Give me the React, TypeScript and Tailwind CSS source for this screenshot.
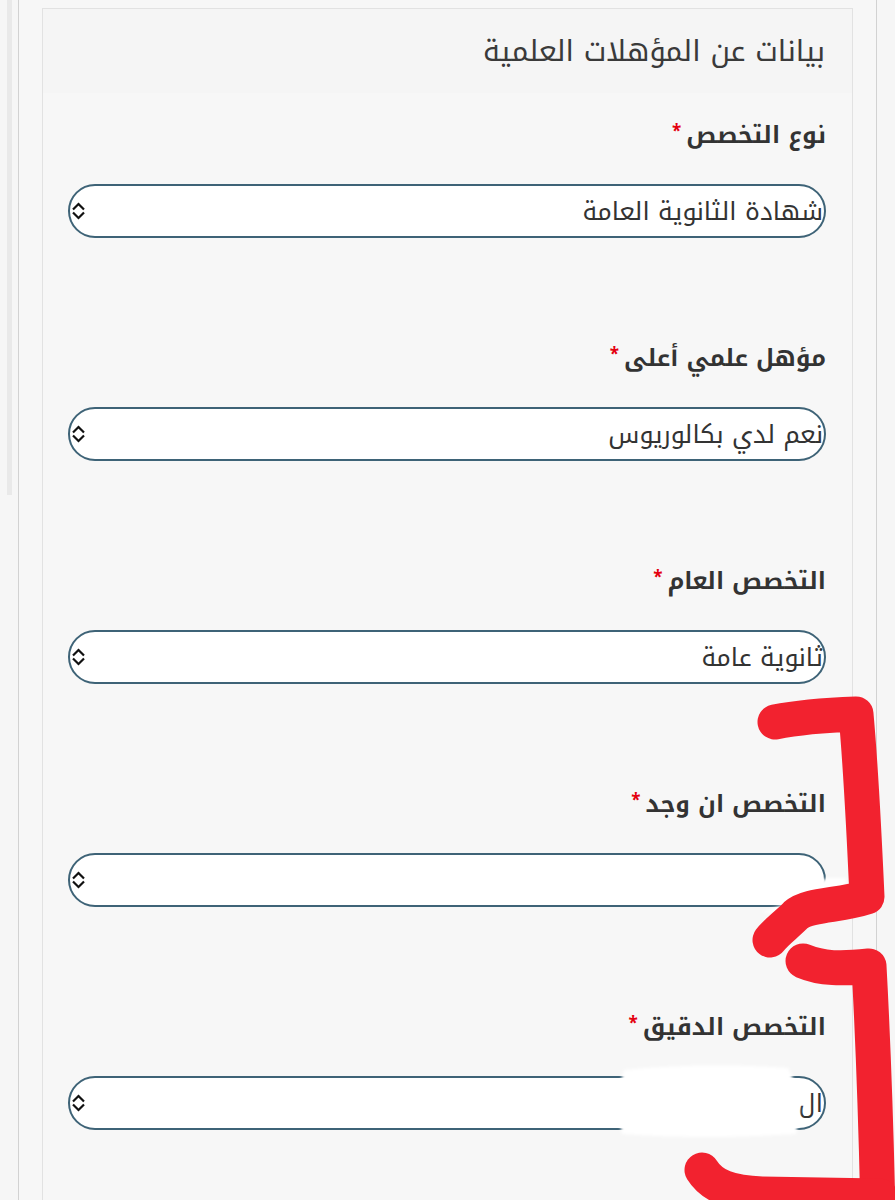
import React from "react";

interface Field {
  label: string;
  value: string;
}

const FIELDS: Field[] = [
  { label: "نوع التخصص", value: "شهادة الثانوية العامة" },
  { label: "مؤهل علمي أعلى", value: "نعم لدي بكالوريوس" },
  { label: "التخصص العام", value: "ثانوية عامة" },
  { label: "التخصص ان وجد", value: "" },
  { label: "التخصص الدقيق", value: "ال" },
];

const FONT = {
  fontFamily: '"Noto Kufi Arabic", "Noto Sans Arabic", "DejaVu Sans", sans-serif',
};

export default function App() {
  return (
    <div
      className="relative h-[1200px] w-[895px] overflow-hidden bg-[#f6f6f6] text-[#333]"
      style={FONT}
    >
      <div className="flex h-full pl-[7px]">
        {/* scroll thumb */}
        <div className="h-[495px] w-[5px] shrink-0 bg-[#e9e9e9]" />

        <div className="ml-[6px] h-full w-[859px] shrink-0 border-x border-[#d2d2d2] bg-[#f7f7f7] px-[23px] pt-[8px]">
          <div dir="rtl" className="h-full border-x border-t border-[#e2e2e2] bg-[#f7f7f7]">
            <div className="flex h-[84px] items-center bg-[#f5f5f5] pr-[27px]">
              <h2 className="text-[29px] font-normal leading-none text-[#3a3a3a]">
                بيانات عن المؤهلات العلمية
              </h2>
            </div>

            <div className="flex flex-col pl-[25px] pr-[26px] pt-[26px]">
              {FIELDS.map((f, i) => (
                <SelectField key={i} {...f} />
              ))}
            </div>
          </div>
        </div>
      </div>

      <Annotations />
    </div>
  );
}

function SelectField({ label, value }: Field) {
  return (
    <div className="mb-[104px]">
      <label className="flex h-[34px] items-center gap-[5px] text-[23.5px] font-bold leading-none text-[#333]">
        {label}
        <span className="-mt-[10px] text-[17px] text-[#e4000f]">*</span>
      </label>
      <div className="relative mt-[31px] flex h-[54px] items-center rounded-full border-2 border-[#3e6377] bg-white">
        <span className="pr-[1px] text-[25px] leading-none text-[#333]">{value}</span>
        <svg
          className="absolute left-[1px] top-1/2 -translate-y-1/2"
          width="15"
          height="20"
          viewBox="0 0 15 20"
          fill="none"
          stroke="#111"
          strokeWidth="2.2"
        >
          <path d="M2 8.5 L7.5 3 L13 8.5" />
          <path d="M2 11.5 L7.5 17 L13 11.5" />
        </svg>
      </div>
    </div>
  );
}

/* red marker strokes and white smudges drawn over the screenshot */
function Annotations() {
  return (
    <svg
      className="pointer-events-none absolute inset-0"
      width="895"
      height="1200"
      viewBox="0 0 895 1200"
    >
      <defs>
        <filter id="soft">
          <feGaussianBlur stdDeviation="1.5" />
        </filter>
      </defs>
      <g fill="#ffffff" filter="url(#soft)">
        <path d="M624 1070 Q700 1062 788 1068 Q806 1100 796 1134 Q700 1140 622 1134 Q614 1100 624 1070 Z" />
        <path d="M762 912 Q792 904 826 878 L846 878 L846 916 Q800 918 762 912 Z" />
      </g>
      <g
        fill="none"
        stroke="#f2222f"
        strokeWidth="35"
        strokeLinecap="round"
        strokeLinejoin="round"
      >
        <path d="M775 722 C800 717 830 715 856 714 C861 770 864 830 867 897 C840 906 808 904 796 915 C786 925 776 932 770 940" />
        <path d="M803 961 C822 969 842 969 869 966 C873 1040 876 1120 878 1215" />
        <path d="M702 1170 C712 1186 730 1193 762 1194 L880 1196" />
      </g>
    </svg>
  );
}
